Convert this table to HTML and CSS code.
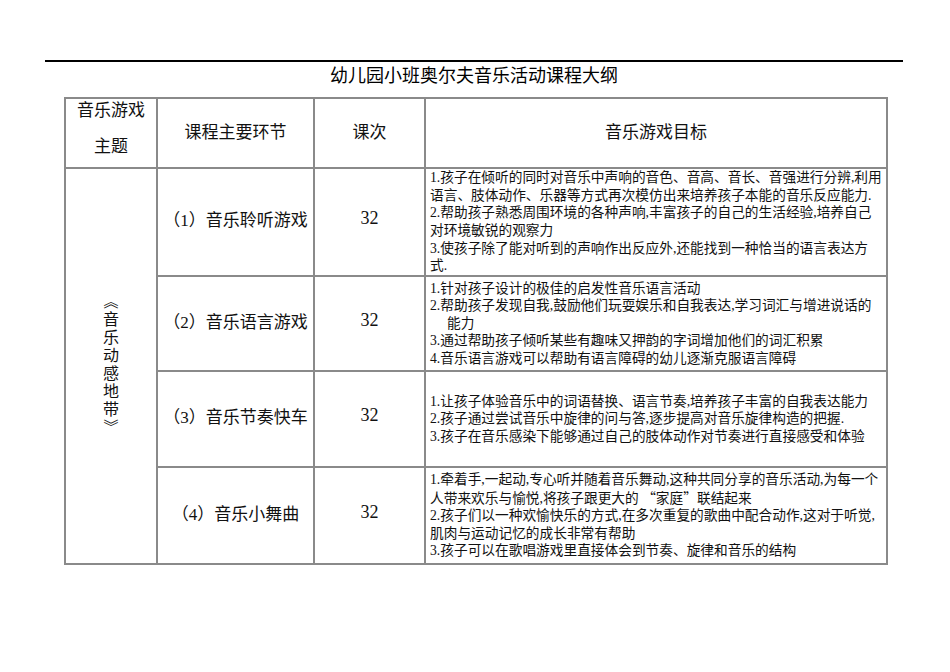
FILE: index.html
```html
<!DOCTYPE html>
<html lang="zh-CN">
<head>
<meta charset="utf-8">
<title>幼儿园小班奥尔夫音乐活动课程大纲</title>
<link rel="stylesheet" href="styles.css">
</head>
<body>
<div class="page">
  <div class="rule"></div>
  <h1 class="title">幼儿园小班奥尔夫音乐活动课程大纲</h1>
  <table class="plan">
    <colgroup>
      <col class="c-theme">
      <col class="c-part">
      <col class="c-count">
      <col class="c-goal">
    </colgroup>
    <thead>
      <tr class="r-head">
        <th class="h-theme"><div class="theme-lines">音乐游戏<br>主题</div></th>
        <th>课程主要环节</th>
        <th>课次</th>
        <th>音乐游戏目标</th>
      </tr>
    </thead>
    <tbody>
      <tr class="r-1">
        <td class="theme" rowspan="4"><div class="vertical"><span class="bracket">《</span>音乐动感地带<span class="bracket">》</span></div></td>
        <td class="part">（1）音乐聆听游戏</td>
        <td class="count">32</td>
        <td class="goal">
          <div>1.孩子在倾听的同时对音乐中声响的音色、音高、音长、音强进行分辨,利用</div>
          <div>语言、肢体动作、乐器等方式再次模仿出来培养孩子本能的音乐反应能力.</div>
          <div>2.帮助孩子熟悉周围环境的各种声响,丰富孩子的自己的生活经验,培养自己</div>
          <div>对环境敏锐的观察力</div>
          <div>3.使孩子除了能对听到的声响作出反应外,还能找到一种恰当的语言表达方</div>
          <div>式.</div>
        </td>
      </tr>
      <tr class="r-2">
        <td class="part">（2）音乐语言游戏</td>
        <td class="count">32</td>
        <td class="goal">
          <div>1.针对孩子设计的极佳的启发性音乐语言活动</div>
          <div>2.帮助孩子发现自我,鼓励他们玩耍娱乐和自我表达,学习词汇与增进说话的</div>
          <div class="indent">能力</div>
          <div>3.通过帮助孩子倾听某些有趣味又押韵的字词增加他们的词汇积累</div>
          <div>4.音乐语言游戏可以帮助有语言障碍的幼儿逐渐克服语言障碍</div>
        </td>
      </tr>
      <tr class="r-3">
        <td class="part">（3）音乐节奏快车</td>
        <td class="count">32</td>
        <td class="goal">
          <div>1.让孩子体验音乐中的词语替换、语言节奏,培养孩子丰富的自我表达能力</div>
          <div>2.孩子通过尝试音乐中旋律的问与答,逐步提高对音乐旋律构造的把握.</div>
          <div>3.孩子在音乐感染下能够通过自己的肢体动作对节奏进行直接感受和体验</div>
        </td>
      </tr>
      <tr class="r-4">
        <td class="part">（4）音乐小舞曲</td>
        <td class="count">32</td>
        <td class="goal">
          <div>1.牵着手,一起动,专心听并随着音乐舞动,这种共同分享的音乐活动,为每一个</div>
          <div>人带来欢乐与愉悦,将孩子跟更大的 <span class="cjk">“家庭”</span>联结起来</div>
          <div>2.孩子们以一种欢愉快乐的方式,在多次重复的歌曲中配合动作,这对于听觉,</div>
          <div>肌肉与运动记忆的成长非常有帮助</div>
          <div>3.孩子可以在歌唱游戏里直接体会到节奏、旋律和音乐的结构</div>
        </td>
      </tr>
    </tbody>
  </table>
</div>
</body>
</html>
```

FILE: styles.css
```css
html, body {
  margin: 0;
  padding: 0;
  background: #ffffff;
}

body {
  font-family: "Liberation Serif", "Noto Sans CJK SC", serif;
  color: #111111;
  text-spacing-trim: space-all;
}

.page {
  padding: 60px 0 0 45px;
}

.rule {
  width: 858px;
  border-top: 2px solid #000000;
}

.title {
  width: 858px;
  margin: 2px 0 0;
  text-align: center;
  font-size: 18px;
  font-weight: 400;
  line-height: 24px;
  color: #000000;
}

.plan {
  margin: 9px 0 0 19px;
  width: 822px;
  border-collapse: collapse;
  table-layout: fixed;
}

.c-theme { width: 92px; }
.c-part { width: 157px; }
.c-count { width: 111px; }
.c-goal { width: 462px; }

.plan th,
.plan td {
  border: 2px solid #8a8a8a;
  padding: 0;
  vertical-align: middle;
  text-align: center;
}

.plan th {
  font-size: 17px;
  font-weight: 400;
  padding-bottom: 6px;
}

.plan th.h-theme {
  padding: 0;
}

.theme-lines {
  line-height: 36px;
  margin-top: -8px;
}

.r-head { height: 70px; }
.r-1 { height: 108px; }
.r-2 { height: 95px; }
.r-3 { height: 96px; }
.r-4 { height: 97px; }

.theme {
  text-align: center;
}

.vertical {
  display: inline-block;
  writing-mode: vertical-rl;
  font-family: "Noto Sans CJK SC", sans-serif;
  font-size: 16px;
  line-height: 18px;
  letter-spacing: 2px;
  margin-top: 2px;
}

.bracket {
  text-orientation: sideways;
  font-size: 15px;
}

.part {
  font-size: 17px;
  padding-bottom: 7px !important;
  padding-left: 0 !important;
}

.count {
  font-size: 18px;
  padding-bottom: 7px !important;
}

.goal {
  text-align: left !important;
  font-size: 13.7px;
  line-height: 17.6px;
  padding: 0 2px 0 4px !important;
  white-space: nowrap;
}

.indent {
  padding-left: 17px;
}

.cjk {
  font-family: "Noto Sans CJK SC", sans-serif;
}
```
